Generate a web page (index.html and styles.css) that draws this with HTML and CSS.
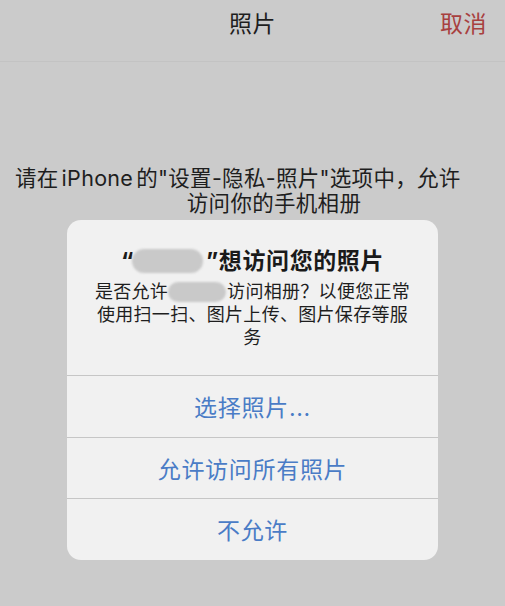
FILE: index.html
```html
<!DOCTYPE html>
<html lang="zh-CN">
<head>
<meta charset="utf-8">
<title>照片</title>
<link rel="stylesheet" href="styles.css">
</head>
<body>
<header class="topbar">
  <div class="spacer"></div>
  <div class="title">照片</div>
  <div class="cancel">取消</div>
</header>
<main class="content">
  <div class="hint">
    <div class="hint-line1">请在<span class="latin">iPhone</span>的"设置-隐私-照片"选项中，允许</div>
    <div class="hint-line2">访问你的手机相册</div>
  </div>
  <section class="alert">
    <div class="alert-body">
      <div class="alert-title">“<span class="blur blur-title"></span>”想访问您的照片</div>
      <div class="alert-msg">是否允许<span class="blur blur-msg"></span>访问相册？以便您正常使用扫一扫、图片上传、图片保存等服务</div>
    </div>
    <div class="alert-btn">选择照片...</div>
    <div class="alert-btn">允许访问所有照片</div>
    <div class="alert-btn">不允许</div>
  </section>
</main>
</body>
</html>
```
FILE: styles.css
```css
html, body {
  margin: 0;
  padding: 0;
}
body {
  background: #cbcbcb;
  font-family: "Inter", "Noto Sans CJK SC", sans-serif;
  width: 505px;
  height: 606px;
  overflow: hidden;
}
.topbar {
  box-sizing: border-box;
  height: 62px;
  padding-top: 9px;
  display: grid;
  grid-template-columns: 1fr auto 1fr;
  align-items: start;
  border-bottom: 1px solid #c3c3c3;
}
.title {
  font-size: 23px;
  line-height: 30px;
  color: #1e1e1e;
  letter-spacing: 0.5px;
}
.cancel {
  justify-self: end;
  padding-right: 18px;
  font-size: 23px;
  line-height: 30px;
  color: #a8403f;
  letter-spacing: 0.5px;
}
.content {
  padding-top: 104px;
}
.hint {
  font-size: 21.5px;
  line-height: 25px;
  letter-spacing: 0.3px;
  color: #1e1e1e;
}
.latin {
  margin: 0 3px;
}
.hint-line1 {
  padding-left: 15px;
  white-space: nowrap;
}
.hint-line2 {
  text-align: center;
  padding-left: 43px;
}
.alert {
  margin: 4px 0 0 67px;
  width: 371px;
  background: #f1f1f1;
  border-radius: 14px;
  overflow: hidden;
}
.alert-body {
  padding: 26px 25px 26px;
  text-align: center;
}
.alert-title {
  font-size: 23px;
  font-weight: bold;
  line-height: 30px;
  color: #1a1a1a;
  letter-spacing: 0.6px;
  white-space: nowrap;
}
.blur {
  display: inline-block;
  background: #c9c9c9;
  border-radius: 12px;
  vertical-align: middle;
  filter: blur(1px);
}
.blur-title {
  width: 71px;
  height: 24px;
  margin: -4px 3px 0 -2px;
}
.blur-msg {
  width: 58px;
  height: 20px;
  border-radius: 10px;
  margin: -3px 1px 0 0;
}
.alert-msg {
  margin-top: 4px;
  font-size: 18px;
  line-height: 23px;
  letter-spacing: 0.3px;
  color: #1e1e1e;
}
.alert-btn {
  box-sizing: border-box;
  height: 61.5px;
  border-top: 1px solid #c6c6c6;
  display: flex;
  align-items: center;
  justify-content: center;
  font-size: 23px;
  color: #4a7cc6;
  letter-spacing: 0.7px;
}
```
